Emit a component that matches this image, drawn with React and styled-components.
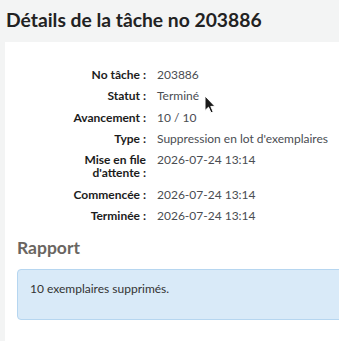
import React from "react";
import styled, { createGlobalStyle } from "styled-components";

const GlobalStyle = createGlobalStyle`
  html, body { margin: 0; padding: 0; overflow: hidden; }
  body {
    background: #f3f4f4;
    font-family: "Lato", "Open Sans", sans-serif;
    color: #222;
  }
`;

const Page = styled.div`
  position: relative;
  width: 420px;
  min-height: 341px;
  padding-top: 8px;
`;

const Title = styled.h1`
  margin: 0 0 10px 0;
  padding-left: 6px;
  font-size: 19.3px;
  line-height: 24px;
  font-weight: 700;
  color: #222;
`;

const Panel = styled.main`
  margin-left: 5px;
  background: #fff;
  padding: 22px 12px 40px;
  min-height: 300px;
`;

const Rows = styled.ol`
  list-style: none;
  margin: 0;
  padding: 0;
`;

const Row = styled.li`
  display: flex;
  align-items: flex-start;
  padding: 4.15px 0;
  font-size: 12px;
  line-height: 13px;
`;

const Label = styled.span`
  flex: 0 0 129px;
  text-align: right;
  margin-right: 11px;
  font-weight: 700;
  color: #1c1c1c;
`;

const Value = styled.span`
  color: #4a4d52;
  white-space: nowrap;
`;

const Heading = styled.h2`
  margin: 11.5px 0 9.5px;
  font-size: 17.5px;
  line-height: 22px;
  font-weight: 700;
  color: #6a6561;
`;

const Alert = styled.div`
  width: 396px;
  box-sizing: border-box;
  background: #d9eaf8;
  border: 1px solid #b6d6f0;
  border-radius: 4px;
  padding: 10px 12px 21px;
  font-size: 12px;
  line-height: 18px;
  color: #333;
`;

const Cursor = styled.svg`
  position: absolute;
  left: 204px;
  top: 95px;
  width: 12px;
  height: 19px;
`;

const rows = [
  ["No tâche", "203886"],
  ["Statut", "Terminé"],
  ["Avancement", "10 / 10"],
  ["Type", "Suppression en lot d'exemplaires"],
  [["Mise en file", "d'attente"], "2026-07-24 13:14"],
  ["Commencée", "2026-07-24 13:14"],
  ["Terminée", "2026-07-24 13:14"],
];

export default function App() {
  return (
    <Page>
      <GlobalStyle />
      <Title>Détails de la tâche no 203886</Title>
      <Panel>
        <Rows>
          {rows.map(([label, value], i) => (
            <Row key={i}>
              <Label>
                {Array.isArray(label) ? (
                  <>
                    {label[0]}
                    <br />
                    {label[1]}
                    {"\u00a0:"}
                  </>
                ) : (
                  label + "\u00a0:"
                )}
              </Label>
              <Value>{value}</Value>
            </Row>
          ))}
        </Rows>
        <Heading>Rapport</Heading>
        <Alert>10 exemplaires supprimés.</Alert>
      </Panel>
      <Cursor viewBox="0 0 12 19">
        <path
          d="M1 1 L1 15.5 L4.5 12.2 L7 17.8 L9.2 16.8 L6.8 11.4 L11 11.4 Z"
          fill="#1a1a1a"
          stroke="#fff"
          strokeWidth="1"
          strokeLinejoin="round"
        />
      </Cursor>
    </Page>
  );
}
